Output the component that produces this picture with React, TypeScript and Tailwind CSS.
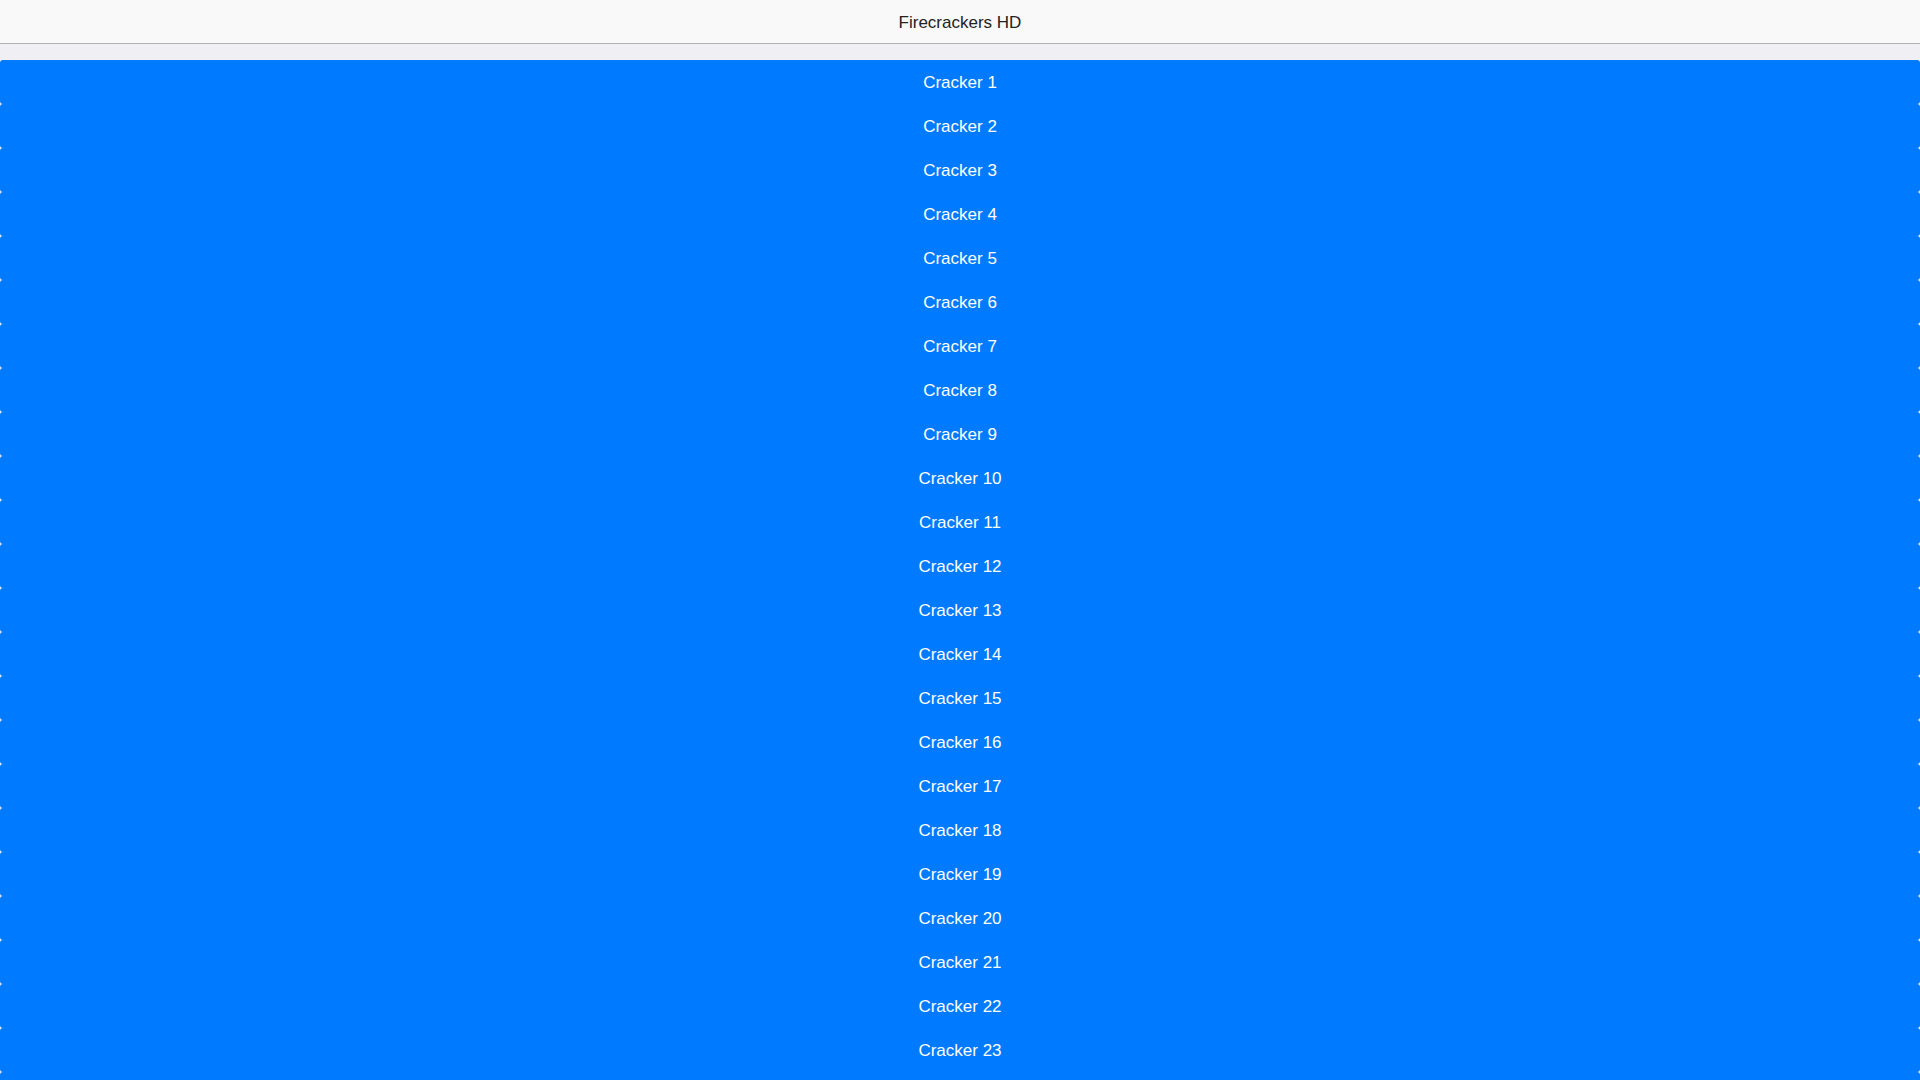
import React from "react";

const crackers = Array.from({ length: 24 }, (_, i) => `Cracker ${i + 1}`);

export default function App() {
  return (
    <div
      className="h-screen overflow-hidden bg-[#efeff4]"
      style={{ fontFamily: '"Liberation Sans", Arial, sans-serif' }}
    >
      <header className="h-[44px] pt-[2px] bg-[#f9f9f9] border-b border-[#b2b2b2] flex items-center justify-center">
        <h1 className="text-[17px] text-[#222] font-normal">Firecrackers HD</h1>
      </header>
      <main className="pt-4">
        <ul className="flex flex-col">
          {crackers.map((name) => (
            <li key={name}>
              <button className="w-full h-[44px] pt-[2px] rounded-[3px] bg-[#007aff] text-white text-[17px] flex items-center justify-center">
                {name}
              </button>
            </li>
          ))}
        </ul>
      </main>
    </div>
  );
}
